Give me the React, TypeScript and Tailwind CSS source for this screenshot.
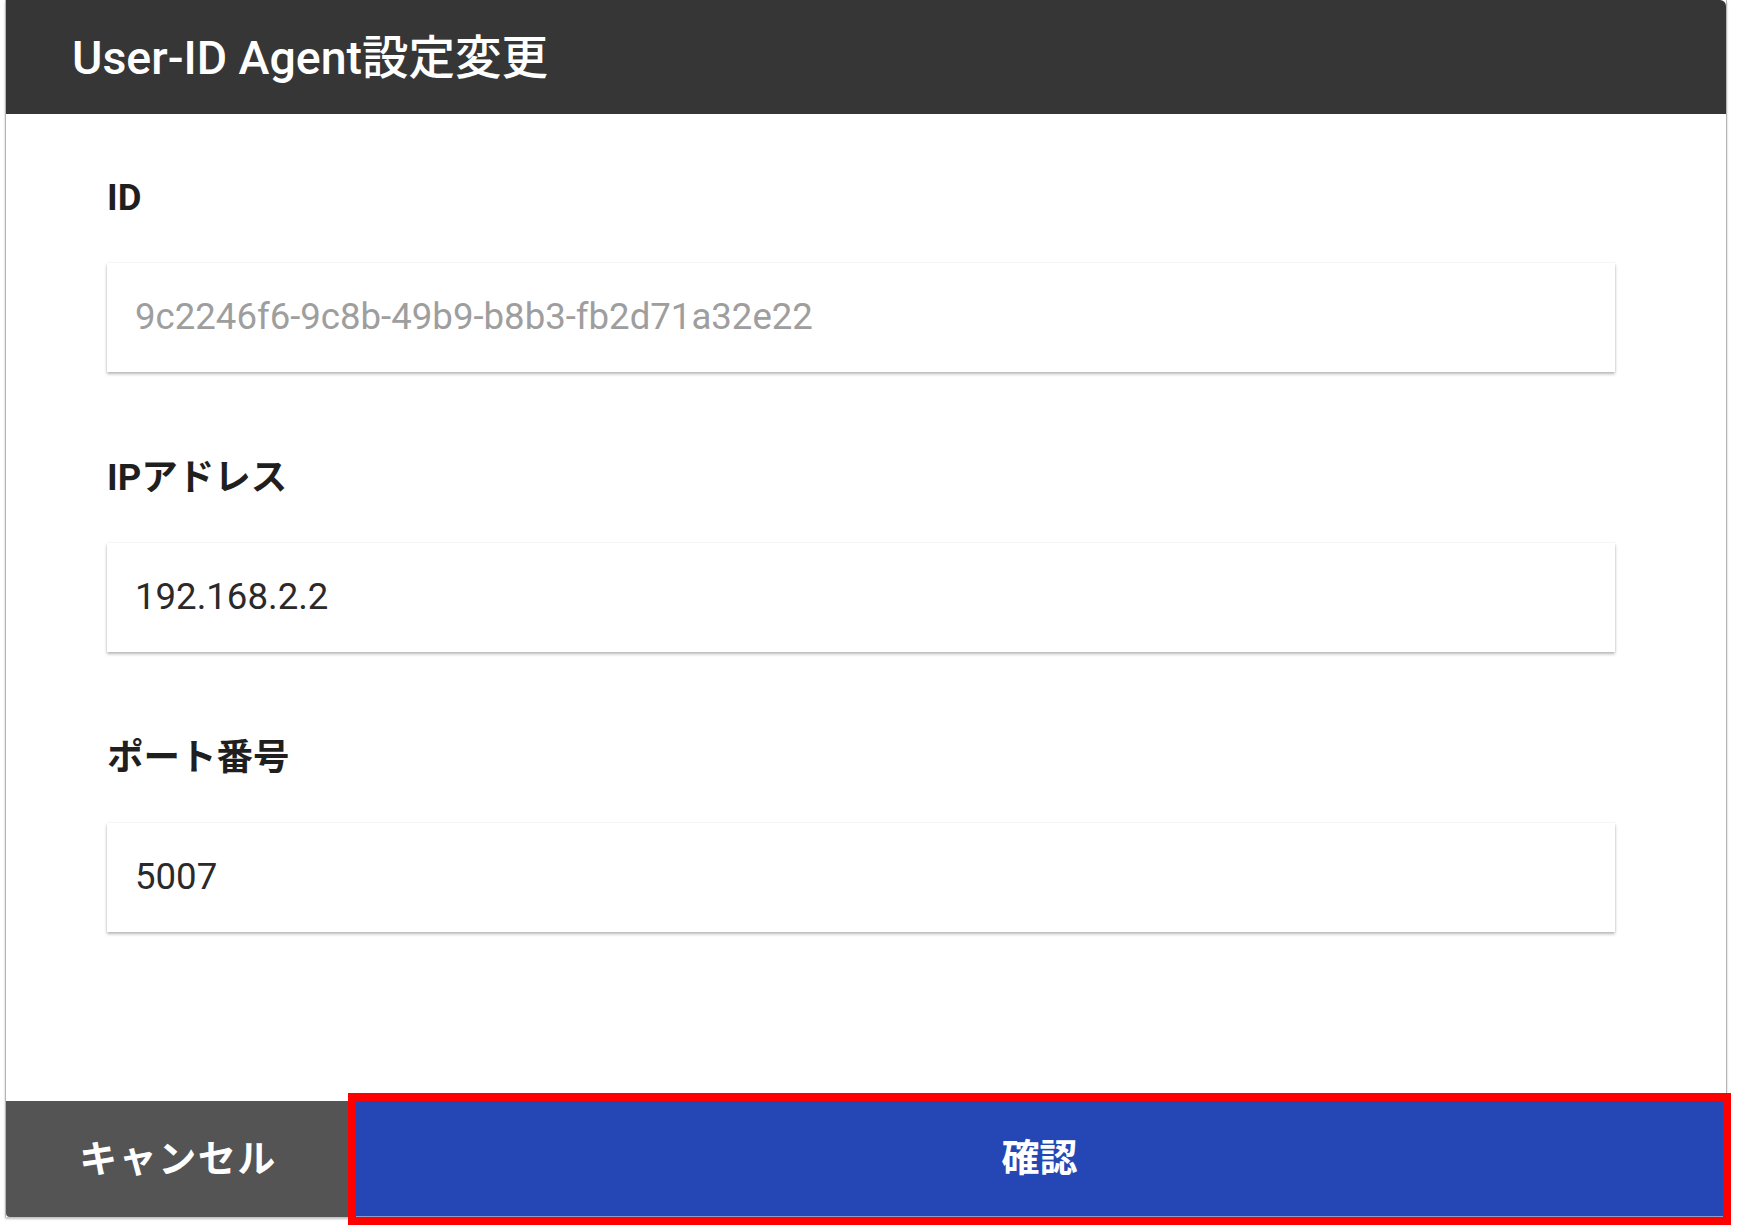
import React from 'react';

const font = "font-['Roboto','Noto_Sans_CJK_JP',sans-serif]";

interface FieldProps {
  label: string;
  value: string;
  disabled?: boolean;
}

const Field = ({ label, value, disabled = false }: FieldProps) => (
  <div className="flex flex-col">
    <label className="h-[44px] leading-[44px] text-[36.5px] font-bold text-[#1f1f1f] mb-[43px]">{label}</label>
    <div className="h-[109px] bg-white flex items-center pl-[28px] shadow-[0_2px_3px_rgba(0,0,0,0.28),0_0_2px_rgba(0,0,0,0.08)]">
      <span className={`text-[36.6px] ${disabled ? 'text-[#9e9e9e]' : 'text-[#2a2a2a]'}`}>{value}</span>
    </div>
  </div>
);

const App = () => {
  const fields = [
    { label: 'ID', value: '9c2246f6-9c8b-49b9-b8b3-fb2d71a32e22', disabled: true },
    { label: 'IPアドレス', value: '192.168.2.2' },
    { label: 'ポート番号', value: '5007' },
  ];

  return (
    <div className={`w-[1737px] h-[1228px] bg-white ${font}`}>
      <div className="ml-[5px] w-[1722px] h-[1217px] flex flex-col border-x border-[#b5b5b5] shadow-[0_2px_2px_rgba(0,0,0,0.25)]">
        {/* Header */}
        <div className="h-[114px] shrink-0 bg-[#363636] rounded-tr-[6px] flex items-center pl-[66px] pt-[4px]">
          <h1 className="text-[46.5px] font-medium text-white">User-ID Agent設定変更</h1>
        </div>

        {/* Body */}
        <div className="flex-1 flex flex-col gap-[84px] pt-[62px] pl-[101px] pr-[111px]">
          {fields.map((f) => (
            <Field key={f.label} label={f.label} value={f.value} disabled={f.disabled} />
          ))}
        </div>

        {/* Footer */}
        <div className="h-[116px] shrink-0 flex">
          <button className="w-[342px] bg-[#545454] rounded-bl-[4px] text-white text-[38px] font-bold tracking-[1.5px] pl-[2px]">
            キャンセル
          </button>
          <div className="relative flex-1 ml-[8px] mr-[3px]">
            <button className="w-full h-full bg-[#2447b5] border-b border-[#8c9cc8] text-white text-[38px] font-bold">
              確認
            </button>
            {/* highlight frame */}
            <div className="absolute -inset-[8px] border-[8px] border-[#ff0000] pointer-events-none" />
          </div>
        </div>
      </div>
    </div>
  );
};

export default App;
